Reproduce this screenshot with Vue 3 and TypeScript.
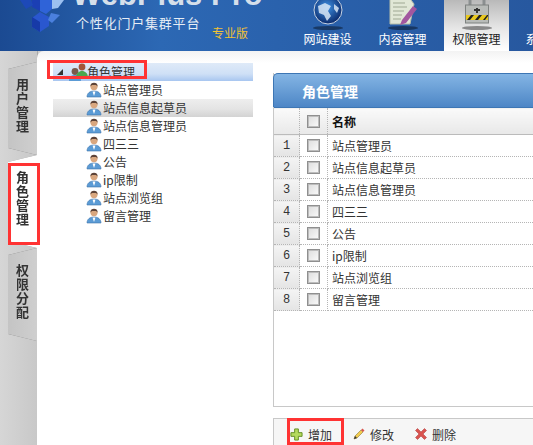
<script setup lang="ts">
const navItems = [
  { label: '网站建设', icon: 'globe' },
  { label: '内容管理', icon: 'doc' },
  { label: '权限管理', icon: 'lock', active: true },
  { label: '系统管理', icon: 'none' },
]
const roles = ['站点管理员', '站点信息起草员', '站点信息管理员', '四三三', '公告', 'ip限制', '站点浏览组', '留言管理']
const tabs = [
  { label: '用户管理' },
  { label: '角色管理', active: true },
  { label: '权限分配' },
]
</script>

<template>
  <div class="page">
    <header class="header">
      <div class="brand">
        <svg class="logo" width="44" height="33" viewBox="0 0 44 33">
          <path d="M20 0h12v9l-6 5-6-3z" fill="#2f63d8" />
          <path d="M20 0v11l-8-4V0z" fill="#1b3fb4" />
          <path d="M32 0h12l-6 8-6 1z" fill="#9cc0f0" />
          <path d="M20 12l9 5v9l-9 6-8-5v-9z" fill="#2a57cf" />
          <path d="M20 22l-8-5v10l8 5z" fill="#173aa8" />
          <path d="M0 0h11l2 5-7 4z" fill="#1d49b8" />
          <path d="M31 13l9 2-8 8-4-3z" fill="#4b80de" />
        </svg>
        <div class="brand-text">
          <div class="brand-name">WebPlus Pro</div>
          <div class="brand-sub">个性化门户集群平台</div>
          <div class="brand-ed">专业版</div>
        </div>
      </div>
      <nav class="nav">
        <div v-for="n in navItems" :key="n.label" class="nav-item" :class="{ on: n.active }">
          <div class="nav-icon">
            <svg v-if="n.icon === 'globe'" width="30" height="25" viewBox="0 0 30 25">
              <defs>
                <radialGradient id="gl" cx="45%" cy="40%" r="60%">
                  <stop offset="0" stop-color="#3f93e6" /><stop offset="1" stop-color="#0b2a6b" />
                </radialGradient>
              </defs>
              <circle cx="15" cy="10" r="14" fill="url(#gl)" stroke="#c7d4e4" />
              <path d="M5 6l7-3 6 3-3 5 3 5-4 5-3-6-5-2zM21 4l5 4-2 5-3-4z" fill="#d8e6f5" opacity=".85" />
            </svg>
            <svg v-else-if="n.icon === 'doc'" width="30" height="25" viewBox="0 0 30 25">
              <path d="M2 -4h18l6 8-4 20H2z" fill="#e1e7d6" stroke="#b5bda9" />
              <path d="M5 3h12M5 7h14M5 11h11M5 15h9M5 19h8" stroke="#9fa893" />
              <path d="M14 20l11-14 4 3-11 14-6 2z" fill="#a2579f" />
            </svg>
            <svg v-else-if="n.icon === 'lock'" width="24" height="25" viewBox="0 0 24 25">
              <path d="M5 6v-8h14v8" fill="none" stroke="#8b8f90" stroke-width="3" />
              <rect x=".5" y="5" width="23" height="18" fill="#b8bbb8" stroke="#7e8280" />
              <rect x="1" y="15" width="22" height="5" fill="#e8c81f" />
              <path d="M2 20l4-5h3l-4 5zM10 20l4-5h3l-4 5zM18 20l4-5h1v1l-3 4z" fill="#222" />
              <path d="M11 8h2v5h-2zM9 9h6v2H9z" fill="#333" />
            </svg>
            <div v-if="n.icon !== 'none'" class="nav-shadow"></div>
          </div>
          <span class="nav-label">{{ n.label }}</span>
        </div>
      </nav>
    </header>

    <div class="body">
      <aside class="side">
        <div class="tabs">
          <div v-for="t in tabs" :key="t.label" class="tab" :class="{ on: t.active }">
            <span class="tab-text">{{ t.label }}</span>
          </div>
        </div>
      </aside>

      <main class="main">
        <section class="tree">
          <div class="tree-row root">
            <span class="arrow"></span>
            <svg class="group-ic" width="20" height="18" viewBox="0 0 20 18">
              <path d="M0 18c0-5 3-6 6-6s6 1 6 6z" fill="#5b9bd5" />
              <circle cx="6" cy="8.500" r="3.400" fill="#7a5a4a" />
              <path d="M7 15c0-5 3-7 6-7s6 2 6 7z" fill="#4aa64e" />
              <circle cx="13" cy="4" r="3.400" fill="#a2553a" />
            </svg>
            <span>角色管理</span>
          </div>
          <div v-for="(r, i) in roles" :key="r" class="tree-row leaf" :class="{ hot: i === 1 }">
            <svg class="user-ic" width="16" height="16" viewBox="0 0 16 16">
              <path d="M1 15c0-4 3-6 7-6s7 2 7 6z" fill="#5b9bd5" stroke="#3f76ad" stroke-width=".6" />
              <path d="M6.500 9.500h3L8 14z" fill="#fff" />
              <circle cx="8" cy="4.600" r="3.600" fill="#d9a77f" />
              <path d="M4.400 4.400C4.600 1.600 6 .8 8 .8s3.400.8 3.600 3.600L10 3H6z" fill="#5c4338" />
            </svg>
            <span>{{ r }}</span>
          </div>
        </section>

        <section class="right">
          <div class="card">
            <div class="card-title">角色管理</div>
            <table class="grid">
              <thead>
                <tr>
                  <th class="c-no"></th>
                  <th class="c-check"><span class="check"></span></th>
                  <th class="c-name">名称</th>
                </tr>
              </thead>
              <tbody>
                <tr v-for="(r, i) in roles" :key="r">
                  <td class="c-no">{{ i + 1 }}</td>
                  <td class="c-check"><span class="check"></span></td>
                  <td class="c-name">{{ r }}</td>
                </tr>
              </tbody>
            </table>
          </div>
          <div class="toolbar">
            <button class="tool add">
              <svg width="13" height="13" viewBox="0 0 14 14">
                <path d="M5 1h4v4h4v4H9v4H5V9H1V5h4z" fill="#b5db5e" stroke="#5f8a1c" />
              </svg>
              <span>增加</span>
            </button>
            <button class="tool edit">
              <svg width="12" height="12" viewBox="0 0 12 12">
                <path d="M1 11l1-3 6-6 2 2-6 6z" fill="#f2cc4f" stroke="#8a7a3a" stroke-width=".6" />
                <path d="M8 2l1.500-1.500 2 2L10 4z" fill="#d8574f" />
                <path d="M1 11l1-3 2 2z" fill="#333" />
              </svg>
              <span>修改</span>
            </button>
            <button class="tool del">
              <svg width="12" height="12" viewBox="0 0 12 12">
                <path d="M2.500 .5L6 4 9.500 .5l2 2L8 6l3.500 3.500-2 2L6 8l-3.500 3.500-2-2L4 6 .5 2.500z" fill="#d9534f" stroke="#a33" stroke-width=".5" />
              </svg>
              <span>删除</span>
            </button>
          </div>
        </section>
      </main>
    </div>

    <div class="mark mark-root"></div>
    <div class="mark mark-tab"></div>
    <div class="mark mark-add"></div>
  </div>
</template>

<style scoped>
.page {
  position: relative;
  width: 533px;
  height: 445px;
  overflow: hidden;
  display: flex;
  flex-direction: column;
  font-family: "Noto Sans CJK SC", "Liberation Sans", sans-serif;
  font-size: 12px;
  color: #333;
  background: #fff;
}
.header {
  height: 51px;
  flex: none;
  display: flex;
  overflow: hidden;
  background: linear-gradient(90deg, #1b4a92 0%, #2c68b4 30%, #2a62ad 52%, #27589f 100%);
}
.brand {
  display: flex;
  flex: none;
  width: 290px;
  padding-left: 20px;
  box-sizing: border-box;
}
.logo {
  flex: none;
  margin-right: 12px;
}
.brand-text {
  margin-top: -23px;
  flex: 1;
  min-width: 0;
}
.brand-name {
  height: 36px;
  margin-left: -4px;
  font: bold 31px/36px "Liberation Sans", sans-serif;
  color: #d5dfea;
  white-space: nowrap;
}
.brand-sub {
  height: 16px;
  margin-top: 2px;
  color: #e6edf5;
  font-size: 13px;
  letter-spacing: 0.8px;
  line-height: 16px;
  white-space: nowrap;
}
.brand-ed {
  margin: -5px 0 0 136px;
  color: #f2c233;
  font-size: 12px;
  line-height: 14px;
  white-space: nowrap;
}
.nav {
  flex: none;
  display: flex;
}
.nav-item {
  width: 75px;
  flex: none;
  display: flex;
  flex-direction: column;
  align-items: center;
  color: #fff;
}
.nav-item.on {
  width: 65px;
  margin: 0 3px 0 4px;
  color: #222;
  background: linear-gradient(180deg, #b9b9b9 0%, #e6e6e6 55%, #fff 100%);
}
.nav-icon {
  height: 31px;
  display: flex;
  flex-direction: column;
  align-items: center;
}
.nav-icon svg {
  display: block;
}
.nav-shadow {
  width: 30px;
  height: 4px;
  margin-top: 1px;
  border-radius: 50%;
  background: rgba(0, 0, 0, 0.4);
}
.nav-label {
  font-size: 12px;
  line-height: 16px;
  white-space: nowrap;
}
.body {
  flex: 1;
  display: flex;
  min-height: 0;
  background: #cfcfcf;
}
.side {
  width: 38px;
  flex: none;
  padding: 11px 0 0 8px;
  box-sizing: border-box;
  background: linear-gradient(90deg, #d6d6d6, #c8c8c8);
  border-right: 1px solid #a9a9a9;
}
.tabs {
  display: flex;
  flex-direction: column;
  filter: drop-shadow(0 0 0.6px #777);
}
.tab {
  height: 93px;
  clip-path: polygon(0 7px, 100% 0, 100% 100%, 0 calc(100% - 7px));
  background: linear-gradient(90deg, #c4c4c4, #cfcfcf);
  display: flex;
  justify-content: center;
  padding-top: 15px;
  box-sizing: border-box;
  font-weight: 700;
  color: #333;
}
.tab.on {
  background: #fff;
}
.tab-text {
  width: 14px;
  font-size: 13px;
  line-height: 14px;
  text-align: center;
}
.main {
  flex: 1;
  display: flex;
  gap: 20px;
  padding: 12px 0 0 16px;
  min-width: 0;
  margin-left: -1px;
  border-radius: 7px 0 0 0;
  background: linear-gradient(180deg, #f3f3f3 0, #fff 12px);
}
.tree {
  width: 200px;
  flex: none;
}
.tree-row {
  height: 18px;
  display: flex;
  align-items: center;
  line-height: 18px;
  white-space: nowrap;
}
.root {
  background: linear-gradient(180deg, #dfeaf8 0%, #cfe0f6 60%, #a8c6f0 100%);
  padding-left: 4px;
}
.arrow {
  width: 0;
  height: 0;
  margin-right: 6px;
  border-bottom: 6px solid #333;
  border-left: 6px solid transparent;
}
.group-ic {
  margin-right: -2px;
  flex: none;
}
.leaf {
  padding-left: 33px;
}
.hot {
  background: linear-gradient(180deg, #eeeeee 0%, #e4e4e4 55%, #d3d3d3 100%);
}
.user-ic {
  flex: none;
  margin-right: 1px;
}
.right {
  flex: 1;
  width: 260px;
  min-width: 0;
  display: flex;
  flex-direction: column;
  gap: 11px;
  background: #fff;
}
.card {
  height: 334px;
  margin-top: 10px;
  flex: none;
  box-sizing: border-box;
  border: solid #c8c8c8;
  border-width: 0 0 1px 1px;
}
.card-title {
  height: 34px;
  margin-left: -1px;
  padding-left: 28px;
  line-height: 34px;
  font-size: 14px;
  font-weight: 700;
  color: #fff;
  border-radius: 5px 0 0 0;
  border-top: 1px solid #3d76b4;
  border-left: 1px solid #3d76b4;
  box-sizing: border-box;
  background: linear-gradient(180deg, #84b5e4, #4d86c6);
}
.grid {
  width: 100%;
  border-collapse: collapse;
  table-layout: fixed;
}
.grid th {
  height: 26px;
  padding: 0;
  font-weight: 700;
  color: #111;
  background: linear-gradient(180deg, #fafafa, #e8e8e8);
  border-top: 1px solid #3d76b4;
  border-bottom: 1px solid #bbb;
}
.grid td {
  height: 21px;
  padding: 0;
  border-bottom: 1px dotted #b5b5b5;
}
.c-no {
  width: 25px;
  text-align: center;
  background: linear-gradient(180deg, #f4f4f4, #e4e4e4);
  font-family: "Liberation Mono", monospace;
  font-size: 12px;
  border-right: 1px dotted #b5b5b5;
}
.c-check {
  width: 27px;
  text-align: center;
  border-right: 1px dotted #b5b5b5;
}
.grid .c-name {
  text-align: left;
  padding-left: 4px;
}
.check {
  display: block;
  width: 11px;
  height: 11px;
  margin: 0 auto;
  border: 1px solid #8f8f8f;
  box-shadow: inset 0 0 0 1px #bdbdbd;
  background: linear-gradient(135deg, #dcdcdc, #fbfbfb);
}
.toolbar {
  flex: 1;
  display: flex;
  align-items: flex-start;
  padding: 5px 0 0 16px;
  box-sizing: border-box;
  background: #f6f6f6;
  border: solid #c8c8c8;
  border-width: 1px 0 0 1px;
}
.tool {
  display: flex;
  align-items: center;
  height: 20px;
  padding: 0;
  border: 0;
  background: none;
  font: inherit;
  color: #333;
  white-space: nowrap;
}
.add {
  margin-right: 21px;
}
.edit {
  margin-right: 21px;
}
.tool span {
  margin-left: 5px;
}
.mark {
  position: absolute;
  box-sizing: border-box;
  border: 3px solid #ff3333;
  pointer-events: none;
}
.mark-root {
  left: 47px;
  top: 60px;
  width: 100px;
  height: 19px;
}
.mark-tab {
  left: 8px;
  top: 163px;
  width: 32px;
  height: 82px;
}
.mark-add {
  left: 287px;
  top: 418px;
  width: 57px;
  height: 27px;
}
</style>
